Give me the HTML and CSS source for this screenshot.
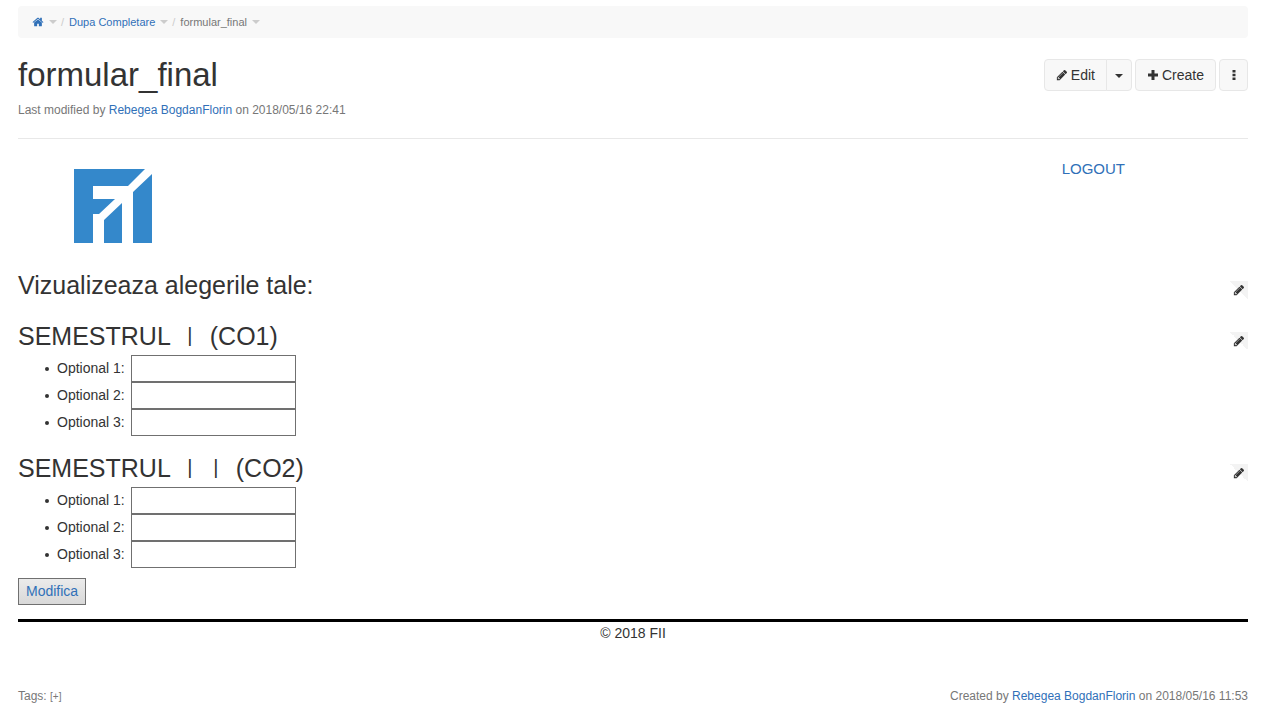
FILE: index.html
```html
<!DOCTYPE html>
<html lang="ro">
<head>
<meta charset="utf-8">
<meta name="viewport" content="width=device-width, initial-scale=1">
<title>formular_final</title>
<link rel="stylesheet" href="styles.css">
</head>
<body>
<svg class="sprite" aria-hidden="true">
  <symbol id="pencil" viewBox="0 0 1792 1792"><path d="M491 1536l91-91-235-235-91 91v107h128v128h107zm523-928q0-22-22-22-10 0-17 7l-542 542q-7 7-7 17 0 22 22 22 10 0 17-7l542-542q7-7 7-17zm-54-192l416 416-832 832h-416v-416zm683 96q0 53-37 90l-166 166-416-416 166-165q36-38 90-38 53 0 91 38l235 234q37 39 37 91z"/></symbol>
  <symbol id="home" viewBox="0 0 1792 1792"><path d="M1472 992v480q0 26-19 45t-45 19h-384v-384h-256v384h-384q-26 0-45-19t-19-45v-480q0-1 .5-3t.5-3l575-474 575 474q1 2 1 6zm223-69l-62 74q-8 9-21 11h-3q-13 0-21-7l-692-577-692 577q-12 8-24 7-13-2-21-11l-62-74q-8-10-7-23.5t11-21.5l719-599q32-26 76-26t76 26l244 204v-195q0-14 9-23t23-9h192q14 0 23 9t9 23v408l219 182q10 8 11 21.5t-7 23.5z"/></symbol>
</svg>
<div class="page">
  <nav aria-label="Breadcrumb">
    <ol class="breadcrumb">
      <li><a href="#" aria-label="Home"><svg class="icon-home"><use href="#home"/></svg></a><span class="caret muted"></span></li>
      <li><a href="#">Dupa Completare</a><span class="caret muted"></span></li>
      <li>formular_final<span class="caret muted"></span></li>
    </ol>
  </nav>

  <header class="doc-header">
    <div>
      <h1>formular_final</h1>
      <p class="meta">Last modified by <a href="#">Rebegea BogdanFlorin</a> on 2018/05/16 22:41</p>
    </div>
    <div class="actions">
      <div class="btn-group">
        <button type="button" class="btn"><svg class="icon"><use href="#pencil"/></svg>Edit</button>
        <button type="button" class="btn btn-caret" aria-label="More edit options"><span class="caret"></span></button>
      </div>
      <button type="button" class="btn"><svg class="icon" viewBox="0 0 12 12"><path d="M4.500 1h3v3.500H11v3H7.500V11h-3V7.500H1v-3h3.500z"/></svg>Create</button>
      <button type="button" class="btn btn-more" aria-label="More actions"><svg class="icon-more" viewBox="0 0 4 12"><path d="M.5 1h3v2.500h-3zM.5 4.750h3v2.500h-3zM.5 8.500h3v2.500h-3z"/></svg></button>
    </div>
  </header>

  <main>
    <div class="banner">
      <svg class="logo" viewBox="0 0 78 74" role="img" aria-label="FII"><path fill="#3488cb" d="M0 0H71L54 17H19V30H41L25 45H19V74H0zM78 5V74H59V23zM48 34V74H30V51z"/></svg>
      <a href="#" class="logout">LOGOUT</a>
    </div>

    <div class="section-head">
      <h2>Vizualizeaza alegerile tale:</h2>
      <a href="#" class="edit-section" aria-label="Edit section"><svg><use href="#pencil"/></svg></a>
    </div>

    <section class="semester">
      <div class="section-head">
        <h2>SEMESTRUL <span class="numeral">|</span> (CO1)</h2>
        <a href="#" class="edit-section" aria-label="Edit section"><svg><use href="#pencil"/></svg></a>
      </div>
      <ul class="options">
        <li><label for="a1">Optional 1:</label><input type="text" id="a1"></li>
        <li><label for="a2">Optional 2:</label><input type="text" id="a2"></li>
        <li><label for="a3">Optional 3:</label><input type="text" id="a3"></li>
      </ul>
    </section>

    <section class="semester">
      <div class="section-head">
        <h2>SEMESTRUL <span class="numeral">|</span><span class="numeral">|</span> (CO2)</h2>
        <a href="#" class="edit-section" aria-label="Edit section"><svg><use href="#pencil"/></svg></a>
      </div>
      <ul class="options">
        <li><label for="b1">Optional 1:</label><input type="text" id="b1"></li>
        <li><label for="b2">Optional 2:</label><input type="text" id="b2"></li>
        <li><label for="b3">Optional 3:</label><input type="text" id="b3"></li>
      </ul>
    </section>

    <button type="button" class="submit">Modifica</button>
    <p class="copyright">© 2018 FII</p>
  </main>

  <footer class="doc-footer">
    <div>Tags: <a href="#" class="add-tag">[+]</a></div>
    <div>Created by <a href="#">Rebegea BogdanFlorin</a> on 2018/05/16 11:53</div>
  </footer>
</div>
</body>
</html>
```
FILE: styles.css
```css
* { box-sizing: border-box; }
body {
  margin: 0;
  background: #fff;
  color: #333;
  font: 14px/20px "Liberation Sans", Arial, sans-serif;
}
h1, h2, p, ul, ol { margin: 0; padding: 0; font-weight: 400; }
a { color: #3070b8; text-decoration: none; }
button, input { font: inherit; color: inherit; }
.sprite { position: absolute; width: 0; height: 0; }
.page { padding: 6px 17px 0 18px; }

.breadcrumb {
  display: flex;
  height: 32px;
  padding: 0 14px;
  align-items: center;
  list-style: none;
  background: #f8f8f8;
  border-radius: 4px;
  color: #777;
  font-size: 11px;
}
.breadcrumb li { display: flex; align-items: center; }
.breadcrumb li + li::before { content: "/"; padding: 0 5px 0 4px; color: #ccc; }
.icon-home { display: block; width: 12px; height: 12px; fill: currentColor; }
.caret {
  display: inline-block;
  border: 4px solid transparent;
  border-top-color: currentColor;
  border-bottom: 0;
}
.caret.muted { margin-left: 5px; color: #ccc; }

.doc-header {
  display: flex;
  justify-content: space-between;
  align-items: flex-start;
  padding: 19px 0 18px;
  border-bottom: 1px solid #e8e8e8;
}
h1 { font-size: 33px; line-height: 36px; }
.meta { margin-top: 7px; color: #777; font-size: 12px; }
.actions { display: flex; gap: 3px; padding-top: 2px; }
.btn-group { display: flex; }
.btn {
  display: flex;
  height: 32px;
  padding: 0 11px 1px;
  align-items: center;
  gap: 3px;
  background: #f8f8f8;
  border: 1px solid #e7e7e7;
  border-radius: 4px;
}
.btn-group .btn:first-child { border-radius: 4px 0 0 4px; }
.btn-group .btn-caret { margin-left: -1px; padding: 2px 8px 0; border-radius: 0 4px 4px 0; }
.icon { width: 12px; height: 12px; fill: currentColor; }
.btn-more { width: 29px; justify-content: center; padding: 0 0 1px; }
.icon-more { width: 4px; height: 12px; fill: currentColor; }

.banner {
  display: flex;
  justify-content: space-between;
  align-items: flex-start;
  padding: 20px 10% 0 56px;
}
.logo { width: 78px; height: 74px; margin-top: 10px; }
.logout { font-size: 15px; }

.section-head { display: flex; justify-content: space-between; }
h2 { padding-bottom: 2px; font-size: 25px; line-height: 26px; }
.numeral {
  display: inline-block;
  width: 26px;
  font-size: 20px;
  line-height: 20px;
  text-align: center;
  vertical-align: 3px;
}
.banner + .section-head { margin-top: 29px; }
.edit-section {
  display: flex;
  width: 18px;
  height: 18px;
  margin-top: 9px;
  align-items: center;
  justify-content: center;
  background: linear-gradient(45deg, transparent 50%, #f3f3f3 50%);
  color: #333;
}
.edit-section svg { width: 12px; height: 12px; fill: currentColor; }
.semester { margin-top: 23px; }
.semester + .semester { margin-top: 19px; }
.options { margin-top: 4px; padding-left: 27px; list-style: none; }
.options li { display: flex; align-items: center; }
.options li::before { content: ""; width: 4px; height: 4px; margin-right: 8px; border-radius: 2px; background: #333; }
.options label { width: 74px; padding-bottom: 2px; }
.options input { width: 165px; height: 27px; padding: 2px 6px; background: #fff; border: 1px solid #707070; }

.submit {
  display: block;
  height: 27px;
  margin-top: 10px;
  padding: 0 7px 2px;
  background: linear-gradient(#ebebeb, #d8d8d8);
  border: 1px solid #707070;
  color: #3070b8;
}
.copyright { margin-top: 14px; padding: 1px 0; border-top: 3px solid #000; text-align: center; }

.doc-footer {
  display: flex;
  justify-content: space-between;
  margin-top: 42px;
  color: #777;
  font-size: 12px;
}
.add-tag { color: #777; font-size: 10px; }
```
